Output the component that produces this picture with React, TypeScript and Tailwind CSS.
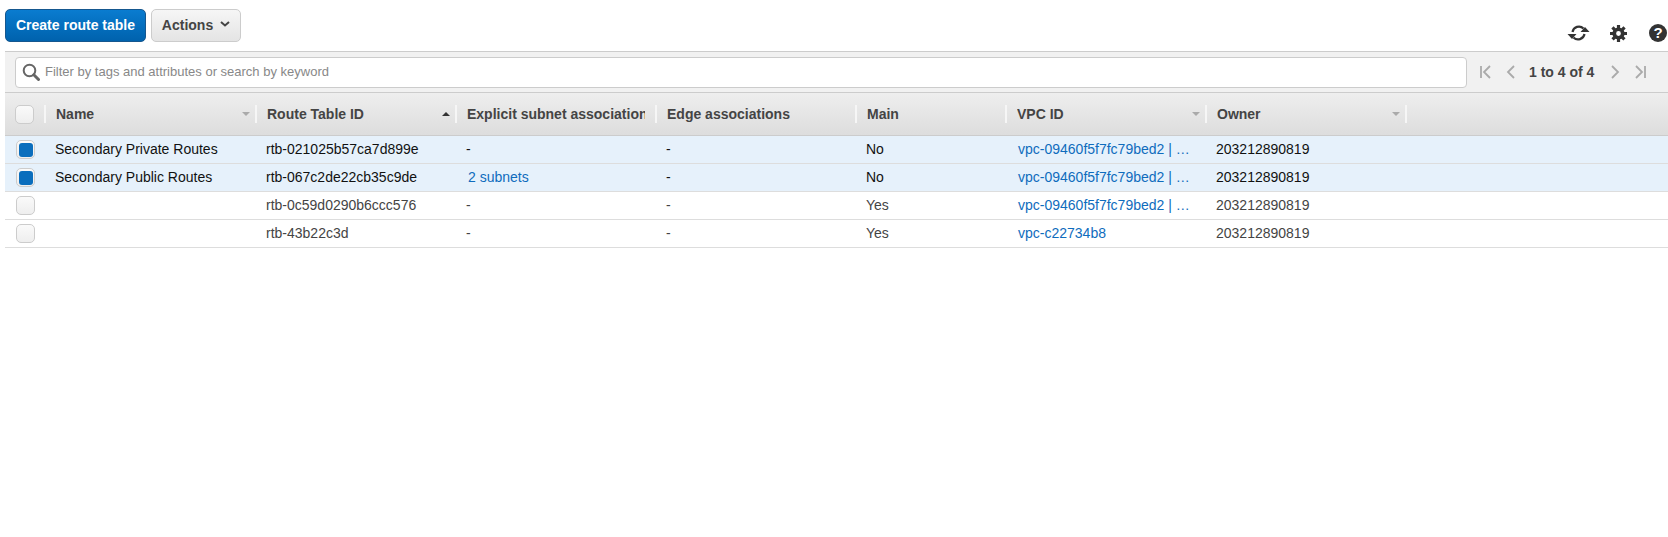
const columns = [
  { title: "Name", width: "w-[211px]", pad: "pr-[5px]", sort: "down" },
  { title: "Route Table ID", width: "w-[200px]", pad: "pr-[5px]", sort: "up" },
  { title: "Explicit subnet associations", width: "w-[200px]", pad: "pr-[10px]" },
  { title: "Edge associations", width: "w-[200px]", pad: "pr-[5px]" },
  { title: "Main", width: "w-[150px]", pad: "pr-[5px]" },
  { title: "VPC ID", width: "w-[200px]", pad: "pr-[5px]", sort: "down" },
  { title: "Owner", width: "w-[200px]", pad: "pr-[5px]", sort: "down" },
];

const rows = [
  { name: "Secondary Private Routes", id: "rtb-021025b57ca7d899e", subnets: "-", main: "No", vpc: "vpc-09460f5f7fc79bed2 | …", selected: true },
  { name: "Secondary Public Routes", id: "rtb-067c2de22cb35c9de", subnets: "2 subnets", main: "No", vpc: "vpc-09460f5f7fc79bed2 | …", selected: true },
  { name: "", id: "rtb-0c59d0290b6ccc576", subnets: "-", main: "Yes", vpc: "vpc-09460f5f7fc79bed2 | …", selected: false },
  { name: "", id: "rtb-43b22c3d", subnets: "-", main: "Yes", vpc: "vpc-c22734b8", selected: false },
];

function Pager({ d }: { d: string }) {
  return (
    <svg width="14" height="16" viewBox="0 0 14 16" fill="none" stroke="#aaa" strokeWidth="1.8">
      <path d={d} />
    </svg>
  );
}

function Checkbox({ checked }: { checked?: boolean }) {
  return (
    <div className="w-[19px] h-[19px] rounded-[5px] border border-[#ccc] bg-gradient-to-b from-[#fafafa] to-[#eee] flex items-center justify-center">
      {checked && <div className="w-[14px] h-[14px] rounded-[3px] bg-[#0a6ebd]" />}
    </div>
  );
}

export default function App() {
  return (
    <div className="min-h-[537px] bg-white pl-[5px] font-['Liberation_Sans',Arial,sans-serif] text-[14px] text-[#444]">
      <div className="h-[51px] flex items-start pt-[9px] gap-[5px]">
        <button className="h-[33px] w-[141px] rounded-[5px] border border-[#15578f] bg-gradient-to-b from-[#0a7cd0] to-[#0062ad] text-white font-bold">
          Create route table
        </button>
        <button className="h-[33px] w-[90px] rounded-[5px] border border-[#ccc] bg-gradient-to-b from-[#f6f6f6] to-[#e4e4e4] font-bold flex items-center justify-center gap-[7px]">
          Actions
          <svg width="10" height="6" viewBox="0 0 10 6" fill="none" stroke="#444" strokeWidth="2" className="mb-[3px]">
            <path d="M1 1l4 3.500L9 1" />
          </svg>
        </button>
        <div className="ml-auto flex items-center pt-[15px] pr-[1px]">
          <svg width="23" height="18" viewBox="0 0 23 18" fill="none" stroke="#333" strokeWidth="2.2">
            <path d="M5.500 8a6.500 6.500 0 0 1 11-3.500" />
            <path d="M17.500 10a6.500 6.500 0 0 1-11 3.500" />
            <path d="M13.500 8h9l-4.500-5z" fill="#333" stroke="none" />
            <path d="M0.500 10h9l-4.500 5z" fill="#333" stroke="none" />
          </svg>
          <svg width="17" height="17" viewBox="0 0 16 16" fill="none" stroke="#333" className="ml-[20px]">
            <circle cx="8" cy="8" r="4" strokeWidth="3.500" />
            <path d="M8 0v16M0 8h16M2.300 2.300l11.400 11.400M13.700 2.300L2.300 13.700" strokeWidth="3" strokeDasharray="3.500 9" />
          </svg>
          <div className="ml-[22px] w-[18px] h-[18px] rounded-full bg-[#333] text-white font-bold text-[15px] leading-[18px] text-center">?</div>
        </div>
      </div>

      <div className="h-[42px] border-y border-[#ccc] bg-[#f1f1f1] flex items-center pl-[10px]">
        <div className="w-[1452px] h-[31px] rounded-[4px] border border-[#ccc] bg-white flex items-center pl-[6px] gap-[5px]">
          <svg width="18" height="18" viewBox="0 0 18 18" fill="none" stroke="#666">
            <circle cx="7.500" cy="7.500" r="5.800" strokeWidth="2" />
            <path d="M11.800 11.800l4.700 4.700" strokeWidth="3" strokeLinecap="round" />
          </svg>
          <span className="text-[13px] text-[#888]">Filter by tags and attributes or search by keyword</span>
        </div>
        <div className="ml-[12px] flex items-center gap-[11px]">
          <Pager d="M2 2v12M11 2L5 8l6 6" />
          <Pager d="M10 2L4 8l6 6" />
          <span className="font-bold text-[#444]">1 to 4 of 4</span>
          <div className="ml-[3px]">
            <Pager d="M4 2l6 6-6 6" />
          </div>
          <Pager d="M3 2l6 6-6 6M12 2v12" />
        </div>
      </div>

      <div className="h-[43px] border-b border-[#ccc] bg-gradient-to-b from-[#eee] to-[#ddd] flex items-center font-bold">
        <div className="w-[39px] pl-[10px] shrink-0 flex">
          <Checkbox />
        </div>
        {columns.map((col) => (
          <div key={col.title} className={`${col.width} ${col.pad} shrink-0 h-[18px] border-l-2 border-[#f6f6f6] pl-[10px] flex items-center justify-between overflow-hidden`}>
            <span className="whitespace-nowrap overflow-hidden">{col.title}</span>
            {col.sort === "down" && <div className="shrink-0 border-x-[4px] border-x-transparent border-t-[4px] border-t-[#aaa]" />}
            {col.sort === "up" && <div className="shrink-0 border-x-[4px] border-x-transparent border-b-[4px] border-b-[#333]" />}
          </div>
        ))}
        <div className="h-[18px] border-l-2 border-[#f6f6f6]" />
      </div>

      {rows.map((row) => (
        <div key={row.id} className={`h-[28px] border-b border-[#ddd] flex items-center ${row.selected ? "bg-[#e6f1fb] text-[#111]" : "bg-white text-[#444]"}`}>
          <div className="w-[40px] pl-[11px] shrink-0 flex">
            <Checkbox checked={row.selected} />
          </div>
          <div className="w-[211px] shrink-0 pl-[10px]">{row.name}</div>
          <div className="w-[200px] shrink-0 pl-[10px]">{row.id}</div>
          <div className="w-[200px] shrink-0 pl-[10px]">
            {row.subnets === "-" ? "-" : <span className="pl-[2px] text-[#0f6cbd]">{row.subnets}</span>}
          </div>
          <div className="w-[200px] shrink-0 pl-[10px]">-</div>
          <div className="w-[150px] shrink-0 pl-[10px]">{row.main}</div>
          <div className="w-[200px] shrink-0 pl-[12px] text-[#0f6cbd]">{row.vpc}</div>
          <div className="w-[200px] shrink-0 pl-[10px]">203212890819</div>
        </div>
      ))}
    </div>
  );
}
